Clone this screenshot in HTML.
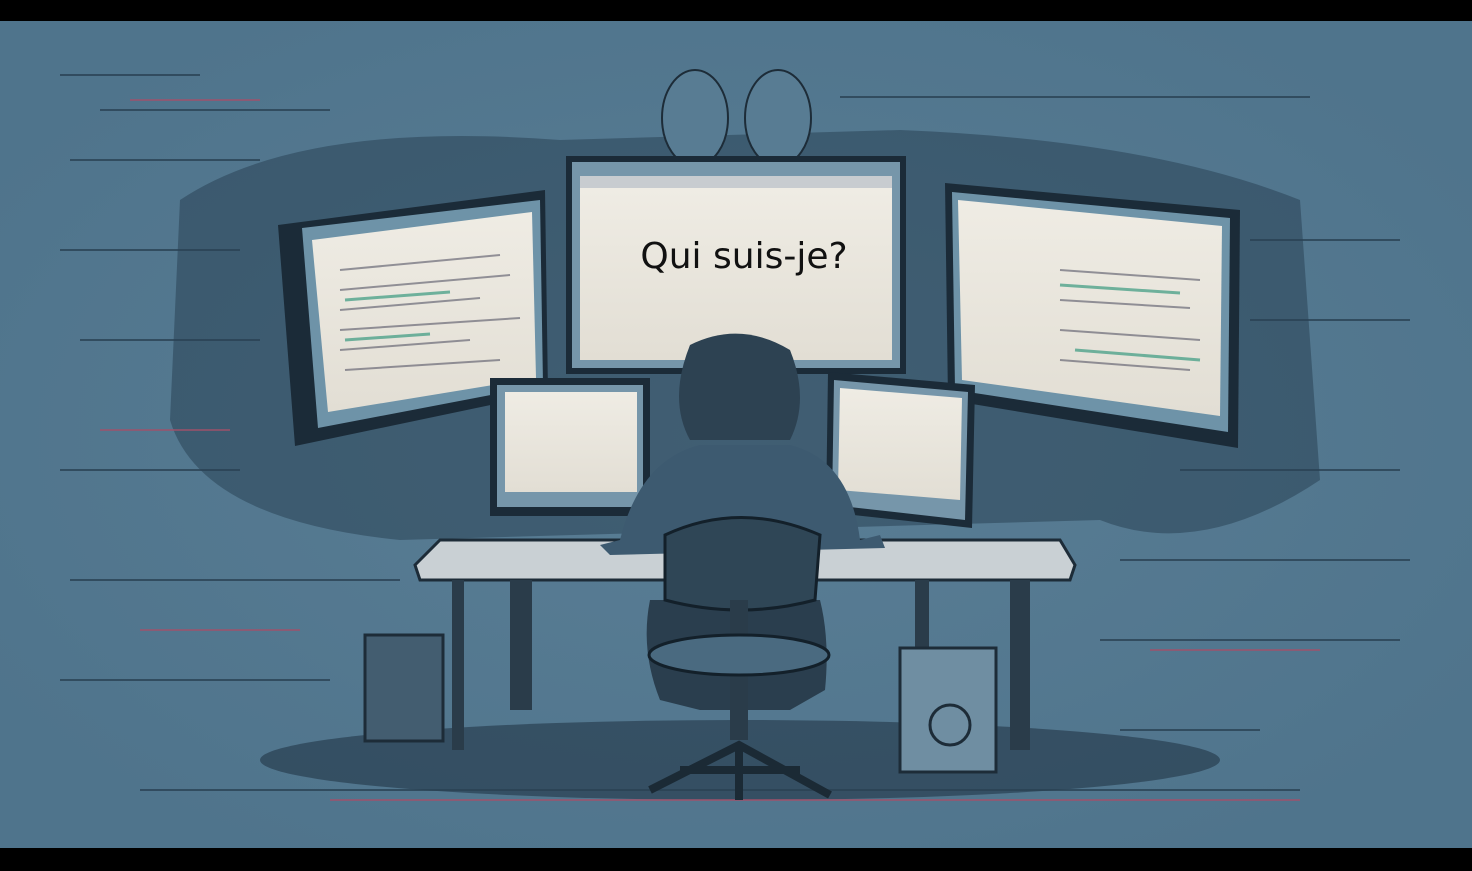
<!DOCTYPE html>
<html><head><meta charset="utf-8"><style>
html,body{margin:0;padding:0;background:#000;}
body{width:1472px;height:871px;overflow:hidden;position:relative;font-family:"Liberation Sans",sans-serif;}
svg{position:absolute;left:0;top:0;}
</style></head><body>
<svg width="1472" height="871" viewBox="0 0 1472 871">
<defs>
<radialGradient id="bg" cx="50%" cy="50%" r="60%"><stop offset="0" stop-color="#5a7e95"/><stop offset="1" stop-color="#4f748c"/></radialGradient>
<linearGradient id="scr" x1="0" y1="0" x2="0" y2="1"><stop offset="0" stop-color="#efece4"/><stop offset="1" stop-color="#e2ded4"/></linearGradient>
</defs>
<rect x="0" y="0" width="1472" height="871" fill="#000"/>
<rect x="0" y="21" width="1472" height="827" fill="url(#bg)"/>
<path d="M180 200 Q 300 120 560 140 L 900 130 Q 1150 140 1300 200 L 1320 480 Q 1200 560 1100 520 L 400 540 Q 200 520 170 420 Z" fill="#22384a" opacity="0.45"/>
<ellipse cx="740" cy="760" rx="480" ry="40" fill="#1e3040" opacity="0.55"/>
<g stroke="#2a4254" stroke-width="2" opacity="0.8">
<line x1="60" y1="75" x2="200" y2="75"/><line x1="100" y1="110" x2="330" y2="110"/><line x1="70" y1="160" x2="260" y2="160"/>
<line x1="60" y1="250" x2="240" y2="250"/><line x1="80" y1="340" x2="260" y2="340"/><line x1="60" y1="470" x2="240" y2="470"/>
<line x1="70" y1="580" x2="400" y2="580"/><line x1="60" y1="680" x2="330" y2="680"/><line x1="140" y1="790" x2="1300" y2="790"/>
<line x1="840" y1="97" x2="1310" y2="97"/><line x1="1250" y1="240" x2="1400" y2="240"/><line x1="1250" y1="320" x2="1410" y2="320"/>
<line x1="1180" y1="470" x2="1400" y2="470"/><line x1="1120" y1="560" x2="1410" y2="560"/><line x1="1100" y1="640" x2="1400" y2="640"/>
<line x1="1120" y1="730" x2="1260" y2="730"/>
</g>
<g stroke="#a4506a" stroke-width="2" opacity="0.7">
<line x1="130" y1="100" x2="260" y2="100"/><line x1="100" y1="430" x2="230" y2="430"/><line x1="140" y1="630" x2="300" y2="630"/>
<line x1="1150" y1="650" x2="1320" y2="650"/><line x1="330" y1="800" x2="1300" y2="800"/>
</g>
<ellipse cx="695" cy="118" rx="33" ry="48" fill="#587c93" stroke="#1d2c38" stroke-width="2"/>
<ellipse cx="778" cy="118" rx="33" ry="48" fill="#587c93" stroke="#1d2c38" stroke-width="2"/>
<polygon points="278,225 545,190 548,393 295,446" fill="#1b2b38"/>
<polygon points="302,228 540,200 543,385 318,428" fill="#6e93a8"/>
<polygon points="312,240 532,212 536,378 328,412" fill="url(#scr)"/>
<g stroke="#556" stroke-width="2" opacity="0.6"><line x1="340" y1="270" x2="500" y2="255"/><line x1="340" y1="290" x2="510" y2="275"/><line x1="340" y1="310" x2="480" y2="298"/><line x1="340" y1="330" x2="520" y2="318"/><line x1="340" y1="350" x2="470" y2="340"/><line x1="345" y1="370" x2="500" y2="360"/></g>
<g stroke="#3a9a80" stroke-width="3" opacity="0.7"><line x1="345" y1="300" x2="450" y2="292"/><line x1="345" y1="340" x2="430" y2="334"/></g>
<rect x="566" y="156" width="340" height="218" fill="#1b2b38"/>
<rect x="572" y="162" width="328" height="206" fill="#7696aa"/>
<rect x="580" y="188" width="312" height="172" fill="url(#scr)"/>
<rect x="580" y="176" width="312" height="12" fill="#c8ccd0"/>
<text x="744" y="268" text-anchor="middle" font-family="'DejaVu Sans','Liberation Sans',sans-serif" font-size="36" fill="#111">Qui suis-je?</text>
<polygon points="945,183 1240,210 1238,448 948,400" fill="#1b2b38"/>
<polygon points="952,192 1230,218 1228,432 955,390" fill="#6e93a8"/>
<polygon points="958,200 1222,226 1220,416 962,380" fill="url(#scr)"/>
<g stroke="#556" stroke-width="2" opacity="0.6"><line x1="1060" y1="270" x2="1200" y2="280"/><line x1="1060" y1="300" x2="1190" y2="308"/><line x1="1060" y1="330" x2="1200" y2="340"/><line x1="1060" y1="360" x2="1190" y2="370"/></g>
<g stroke="#3a9a80" stroke-width="3" opacity="0.7"><line x1="1060" y1="285" x2="1180" y2="293"/><line x1="1075" y1="350" x2="1200" y2="360"/></g>
<rect x="490" y="378" width="160" height="138" fill="#1b2b38"/>
<rect x="497" y="385" width="146" height="122" fill="#7696aa"/>
<rect x="505" y="392" width="132" height="100" fill="url(#scr)"/>
<polygon points="828,372 975,385 972,528 826,512" fill="#1b2b38"/>
<polygon points="834,380 968,392 965,520 832,505" fill="#7696aa"/>
<polygon points="840,388 962,398 960,500 838,490" fill="url(#scr)"/>
<polygon points="415,565 440,540 1060,540 1075,565 1070,580 420,580" fill="#c9d0d4" stroke="#1d2c38" stroke-width="3"/>
<rect x="452" y="580" width="12" height="170" fill="#2a3c4a"/>
<rect x="510" y="580" width="22" height="130" fill="#2a3c4a"/>
<rect x="915" y="580" width="14" height="170" fill="#2a3c4a"/>
<rect x="1010" y="580" width="20" height="170" fill="#2a3c4a"/>
<rect x="365" y="635" width="78" height="106" fill="#435d70" stroke="#1d2c38" stroke-width="3"/>
<rect x="900" y="648" width="96" height="124" fill="#6f8ea2" stroke="#1d2c38" stroke-width="3"/>
<circle cx="950" cy="725" r="20" fill="none" stroke="#1d2c38" stroke-width="3"/>
<path d="M690 345 Q 740 320 790 350 Q 810 400 790 440 L 690 440 Q 668 400 690 345 Z" fill="#2d4252"/>
<path d="M620 540 Q 640 460 700 445 L 790 445 Q 850 460 860 540 L 880 535 L 885 548 L 610 555 L 600 545 Z" fill="#3d5a70"/>
<path d="M650 600 Q 640 650 660 700 L 700 710 L 790 710 L 825 690 Q 830 640 820 600 Z" fill="#2a3e4e"/>
<path d="M665 535 Q 740 500 820 535 L 815 600 Q 740 620 665 600 Z" fill="#2f4656" stroke="#13202a" stroke-width="3"/>
<rect x="730" y="600" width="18" height="140" fill="#2a3c4a"/>
<path d="M650 790 L 739 745 L 830 795 M 739 745 L 739 800 M 680 770 L 800 770" stroke="#1b2a35" stroke-width="8" fill="none"/>
<ellipse cx="739" cy="655" rx="90" ry="20" fill="#4a6a80" stroke="#13202a" stroke-width="3"/>
</svg>
</body></html>
